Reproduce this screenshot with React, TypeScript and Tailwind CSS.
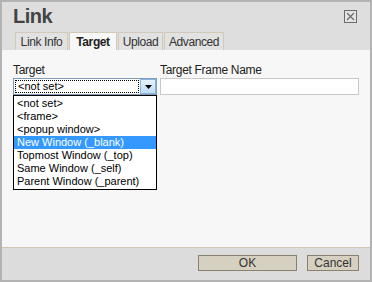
import React from "react";

const items = [
  "<not set>",
  "<frame>",
  "<popup window>",
  "New Window (_blank)",
  "Topmost Window (_top)",
  "Same Window (_self)",
  "Parent Window (_parent)",
];

export default function App() {
  const font = { fontFamily: '"Liberation Sans", Arial, sans-serif' };
  return (
    <div
      className="w-[372px] h-[282px] border-2 border-[#b3b3b3] bg-[#dedede] flex flex-col text-[11px] text-black overflow-hidden"
      style={font}
    >
      {/* Title */}
      <div className="h-[30px] flex items-start justify-between pl-[11px] pr-[13px]">
        <div className="pt-[2px] text-[20px] leading-[24px] font-bold text-[#444] tracking-[-0.5px]">
          Link
        </div>
        <div className="mt-[8px]">
          <svg width="13" height="13" viewBox="0 0 13 13">
            <rect x="0.5" y="0.5" width="12" height="12" fill="#e4e4e4" stroke="#6b6b6b" />
            <path d="M3 3 L10 10 M10 3 L3 10" stroke="#6b6b6b" strokeWidth="1.2" />
          </svg>
        </div>
      </div>
      {/* Tabs */}
      <div className="h-[18px] flex items-end pl-[13px] gap-[1px]">
        <div className="w-[53px] h-[18px] border border-b-0 border-[#d2cab7] bg-[#e2e2e2] flex items-center justify-center text-[12px] text-[#333] tracking-[-0.4px]">
          Link Info
        </div>
        <div className="w-[48px] h-[18px] border border-b-0 border-[#d2cab7] bg-[#f7f7f7] flex items-center justify-center text-[12px] font-bold text-[#222] tracking-[-0.4px]">
          Target
        </div>
        <div className="w-[45px] h-[18px] border border-b-0 border-[#d2cab7] bg-[#e2e2e2] flex items-center justify-center text-[12px] text-[#333] tracking-[-0.4px]">
          Upload
        </div>
        <div className="w-[60px] h-[18px] border border-b-0 border-[#d2cab7] bg-[#e2e2e2] flex items-center justify-center text-[12px] text-[#333] tracking-[-0.4px]">
          Advanced
        </div>
      </div>
      {/* Content */}
      <div className="h-[197px] bg-[#f7f7f7] pt-[12px] pl-[11px] flex gap-[3px]">
        <div className="w-[144px] flex flex-col">
          <div className="h-[16px] leading-[16px] text-[12px] text-[#222] tracking-[-0.3px]">Target</div>
          <div className="h-[17px] border border-[#7f9db9] bg-white flex items-stretch">
            <div className="flex-1 m-[1px] border border-dotted border-black leading-[11px] pl-[2px] text-[11px]">
              &lt;not set&gt;
            </div>
            <div className="w-[16px] border border-[#88b4e4] bg-gradient-to-b from-[#e6f2fc] to-[#bcdcf6] flex items-center justify-center">
              <svg width="7" height="4" viewBox="0 0 7 4">
                <path d="M0 0 L7 0 L3.5 4 Z" fill="#000" />
              </svg>
            </div>
          </div>
          <div className="border border-black bg-white py-[1px] flex flex-col">
            {items.map((it) => (
              <div
                key={it}
                className={
                  it === "New Window (_blank)"
                    ? "h-[13px] leading-[13px] pl-[3px] bg-[#3399ff] text-white"
                    : "h-[13px] leading-[13px] pl-[3px] text-black"
                }
              >
                {it}
              </div>
            ))}
          </div>
        </div>
        <div className="w-[199px] flex flex-col">
          <div className="h-[16px] leading-[16px] text-[12px] text-[#222] tracking-[-0.3px]">
            Target Frame Name
          </div>
          <div className="h-[17px] border border-[#c9c9c9] bg-white" />
        </div>
      </div>
      <div className="h-[1px] bg-[#cfc6b2]" />
      {/* Footer */}
      <div className="h-[32px] flex justify-end items-start pt-[7px] pr-[11px] gap-[10px] bg-[#dcdcdc]">
        <div className="w-[99px] h-[16px] border border-[#8a8270] bg-[#d6d0c0] flex items-center justify-center text-[12px] text-[#333]">
          OK
        </div>
        <div className="w-[52px] h-[16px] border border-[#8a8270] bg-[#d6d0c0] flex items-center justify-center text-[12px] text-[#333]">
          Cancel
        </div>
      </div>
    </div>
  );
}
